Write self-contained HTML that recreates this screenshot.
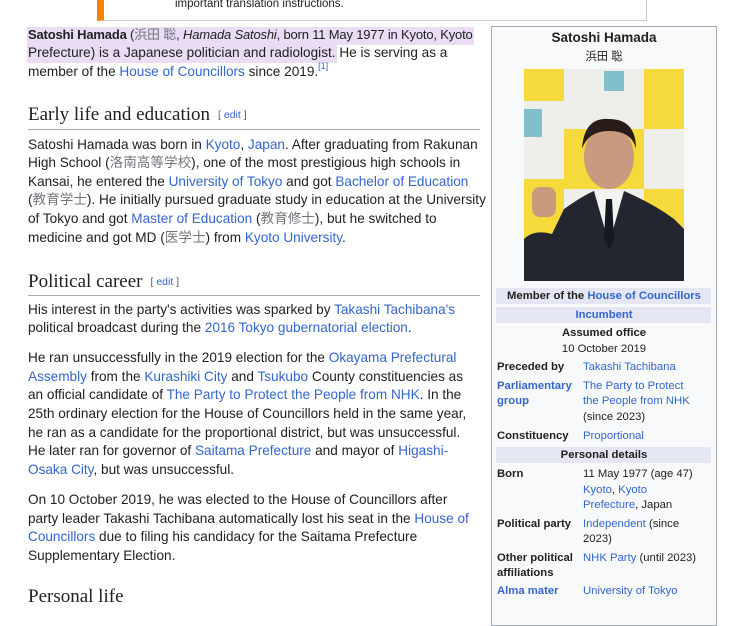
<!DOCTYPE html>
<html><head><meta charset="utf-8"><style>
*{margin:0;padding:0;box-sizing:border-box}
body{width:732px;height:593px;overflow:hidden;background:#fff;font-family:"Liberation Sans","Noto Sans CJK JP",sans-serif;color:#202122;position:relative}
a{color:#3366cc;text-decoration:none}
.l{position:absolute;left:28px;font-size:13.6px;white-space:nowrap;line-height:16px}
.j{color:#72777d}
.h{position:absolute;left:28px;font-family:"Liberation Serif",serif;font-size:19px;color:#202122;white-space:nowrap}
.h span{font-family:"Liberation Sans",sans-serif;font-size:10.5px;color:#54595d;margin-left:8px;vertical-align:2px}
.h span a{color:#3366cc}
.hr{position:absolute;left:28px;width:452px;height:1px;background:#a2a9b1}
.ib{position:absolute;left:491px;top:26px;width:226px;height:600px;border:1px solid #a2a9b1;background:#f8f9fa}
.r{position:absolute;font-size:11.3px;white-space:nowrap;line-height:14px}
.lb{left:497px;font-weight:bold}
.d{left:583px}
.c{left:491px;width:226px;text-align:center}
.bar{position:absolute;left:496px;width:215px;height:16px;background:#e4e6f3}
sup{line-height:0;font-size:9px;color:#3366cc;position:relative;top:-1px}
</style></head><body>
<div style="position:absolute;left:97px;top:-2px;width:550px;height:23px;border:1px solid #c8ccd1;border-left:7px solid #f28500;background:#fff"></div>
<div style="position:absolute;left:175px;top:-2px;font-size:11.5px;color:#202122">important translation instructions.</div>

<div style="position:absolute;left:27px;top:27px;width:447px;height:18px;background:#eadcf5"></div>
<div style="position:absolute;left:27px;top:45px;width:310px;height:18px;background:#eadcf5"></div>
<div class="l" style="top:27px;font-size:13px;letter-spacing:-0.18px"><b>Satoshi Hamada</b> (<span class="j">浜田 聡</span>, <i>Hamada Satoshi</i>, born 11 May 1977 in Kyoto, Kyoto</div>
<div class="l" style="top:45px">Prefecture) is a Japanese politician and radiologist. He is serving as a</div>
<div class="l" style="top:64px">member of the <a>House of Councillors</a> since 2019.<sup>[1]</sup></div>

<div class="h" style="top:104px">Early life and education<span>[ <a>edit</a> ]</span></div>
<div class="hr" style="top:129px"></div>
<div class="l" style="top:137px">Satoshi Hamada was born in <a>Kyoto</a>, <a>Japan</a>. After graduating from Rakunan</div>
<div class="l" style="top:155px">High School (<span class="j">洛南高等学校</span>), one of the most prestigious high schools in</div>
<div class="l" style="top:174px">Kansai, he entered the <a>University of Tokyo</a> and got <a>Bachelor of Education</a></div>
<div class="l" style="top:192px">(<span class="j">教育学士</span>). He initially pursued graduate study in education at the University</div>
<div class="l" style="top:211px">of Tokyo and got <a>Master of Education</a> (<span class="j">教育修士</span>), but he switched to</div>
<div class="l" style="top:230px">medicine and got MD (<span class="j">医学士</span>) from <a>Kyoto University</a>.</div>

<div class="h" style="top:271px">Political career<span>[ <a>edit</a> ]</span></div>
<div class="hr" style="top:295px"></div>
<div class="l" style="top:302px">His interest in the party's activities was sparked by <a>Takashi Tachibana's</a></div>
<div class="l" style="top:320px">political broadcast during the <a>2016 Tokyo gubernatorial election</a>.</div>
<div class="l" style="top:350px">He ran unsuccessfully in the 2019 election for the <a>Okayama Prefectural</a></div>
<div class="l" style="top:369px"><a>Assembly</a> from the <a>Kurashiki City</a> and <a>Tsukubo</a> County constituencies as</div>
<div class="l" style="top:387px">an official candidate of <a>The Party to Protect the People from NHK</a>. In the</div>
<div class="l" style="top:406px">25th ordinary election for the House of Councillors held in the same year,</div>
<div class="l" style="top:425px">he ran as a candidate for the proportional district, but was unsuccessful.</div>
<div class="l" style="top:443px">He later ran for governor of <a>Saitama Prefecture</a> and mayor of <a>Higashi-</a></div>
<div class="l" style="top:462px"><a>Osaka City</a>, but was unsuccessful.</div>
<div class="l" style="top:492px">On 10 October 2019, he was elected to the House of Councillors after</div>
<div class="l" style="top:511px">party leader Takashi Tachibana automatically lost his seat in the <a>House of</a></div>
<div class="l" style="top:529px"><a>Councillors</a> due to filing his candidacy for the Saitama Prefecture</div>
<div class="l" style="top:548px">Supplementary Election.</div>
<div class="h" style="top:586px">Personal life</div>

<div class="ib"></div>
<div class="r c" style="top:30px;font-size:13.5px;font-weight:bold;line-height:16px">Satoshi Hamada</div>
<div class="r c" style="top:50px">浜田 聡</div>
<svg style="position:absolute;left:524px;top:69px" width="160" height="212" viewBox="0 0 160 212">
<rect width="160" height="212" fill="#eeeeea"/>
<rect x="0" y="0" width="40" height="32" fill="#f6d93a"/>
<rect x="120" y="0" width="40" height="60" fill="#f6d93a"/>
<rect x="40" y="60" width="80" height="60" fill="#f6d93a"/>
<rect x="0" y="110" width="40" height="60" fill="#f6d93a"/>
<rect x="120" y="120" width="40" height="60" fill="#f6d93a"/>
<rect x="0" y="40" width="18" height="28" fill="#3aa0b8" opacity=".6"/>
<rect x="80" y="2" width="20" height="20" fill="#3aa0b8" opacity=".6"/>
<path d="M0 190 L0 170 Q10 160 28 165 L40 140 Q60 126 70 122 L100 122 Q130 135 150 150 L160 160 L160 212 L0 212Z" fill="#23262e"/>
<path d="M70 122 L85 175 L100 122Z" fill="#f2f2f0"/>
<path d="M82 130 L88 130 L90 170 L85 180 L80 170Z" fill="#141820"/>
<ellipse cx="85" cy="88" rx="25" ry="32" fill="#c99a7e"/>
<path d="M58 80 Q60 48 85 50 Q112 50 112 80 Q108 62 85 62 Q64 62 58 80Z" fill="#2a1d17"/>
<rect x="8" y="118" width="24" height="30" rx="8" fill="#c99a7e"/>
</svg>
<div class="bar" style="top:288px"></div>
<div class="r c" style="top:289px;font-weight:bold">Member of the <a>House of Councillors</a></div>
<div class="bar" style="top:307px"></div>
<div class="r c" style="top:308px;font-weight:bold"><a>Incumbent</a></div>
<div class="r c" style="top:326px;font-weight:bold">Assumed office</div>
<div class="r c" style="top:342px">10 October 2019</div>
<div class="r lb" style="top:360px">Preceded by</div><div class="r d" style="top:360px"><a>Takashi Tachibana</a></div>
<div class="r lb" style="top:379px"><a>Parliamentary</a></div><div class="r d" style="top:379px"><a>The Party to Protect</a></div>
<div class="r lb" style="top:394px"><a>group</a></div><div class="r d" style="top:394px"><a>the People from NHK</a></div>
<div class="r d" style="top:410px">(since 2023)</div>
<div class="r lb" style="top:429px">Constituency</div><div class="r d" style="top:429px"><a>Proportional</a></div>
<div class="bar" style="top:447px"></div>
<div class="r c" style="top:448px;font-weight:bold">Personal details</div>
<div class="r lb" style="top:467px">Born</div><div class="r d" style="top:467px">11 May 1977 (age 47)</div>
<div class="r d" style="top:483px"><a>Kyoto</a>, <a>Kyoto</a></div>
<div class="r d" style="top:498px"><a>Prefecture</a>, Japan</div>
<div class="r lb" style="top:517px">Political party</div><div class="r d" style="top:517px"><a>Independent</a> (since</div>
<div class="r d" style="top:532px">2023)</div>
<div class="r lb" style="top:551px">Other political</div><div class="r d" style="top:551px"><a>NHK Party</a> (until 2023)</div>
<div class="r lb" style="top:566px">affiliations</div>
<div class="r lb" style="top:584px"><a>Alma mater</a></div><div class="r d" style="top:584px"><a>University of Tokyo</a></div>
</body></html>
